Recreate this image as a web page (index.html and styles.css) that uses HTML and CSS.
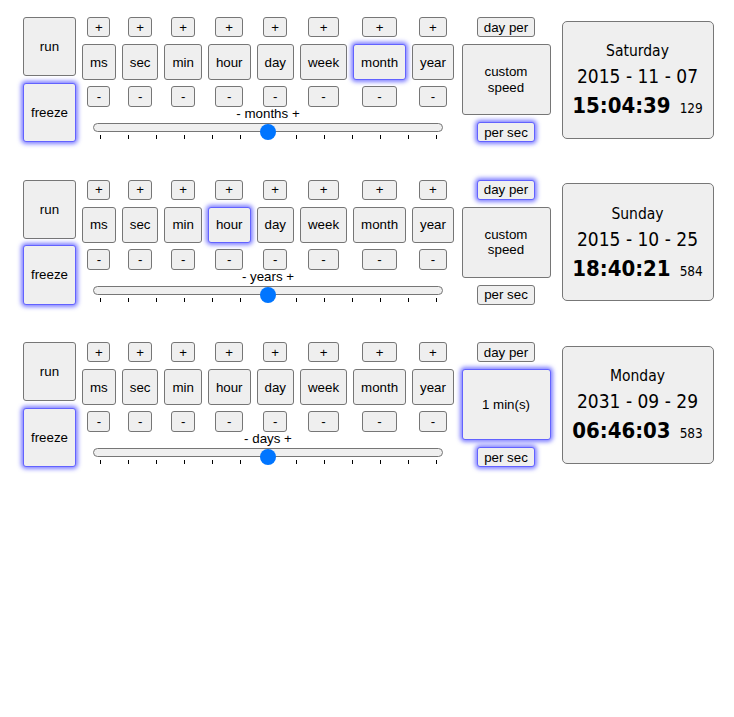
FILE: index.html
```html
<!DOCTYPE html>
<html>
<head>
<meta charset="utf-8">
<title>Clock</title>
<link rel="stylesheet" href="styles.css">
</head>
<body>
<div class="page">

  <div class="row">
    <div class="ctl">
      <button class="big">run</button>
      <button class="big on">freeze</button>
    </div>
    <div class="mid">
      <div class="units">
        <div class="unit"><button class="step">+</button><button class="u">ms</button><button class="step">-</button></div>
        <div class="unit"><button class="step">+</button><button class="u">sec</button><button class="step">-</button></div>
        <div class="unit"><button class="step">+</button><button class="u">min</button><button class="step">-</button></div>
        <div class="unit"><button class="step">+</button><button class="u">hour</button><button class="step">-</button></div>
        <div class="unit"><button class="step">+</button><button class="u">day</button><button class="step">-</button></div>
        <div class="unit"><button class="step">+</button><button class="u">week</button><button class="step">-</button></div>
        <div class="unit"><button class="step">+</button><button class="u on">month</button><button class="step">-</button></div>
        <div class="unit"><button class="step">+</button><button class="u">year</button><button class="step">-</button></div>
      </div>
      <div class="lbl">- months +</div>
      <div class="slider">
        <div class="track"></div>
        <div class="ticks"><i></i><i></i><i></i><i></i><i></i><i></i><i></i><i></i><i></i><i></i><i></i><i></i><i></i></div>
        <div class="thumb"></div>
      </div>
    </div>
    <div class="speed">
      <button class="sm">day per</button>
      <button class="custom">custom<br>speed</button>
      <button class="sm on">per sec</button>
    </div>
    <div class="clock">
      <div class="dname">Saturday</div>
      <div class="ymd">2015 - 11 - 07</div>
      <div class="hms"><b>15:04:39</b><span class="msv">129</span></div>
    </div>
  </div>

  <div class="row">
    <div class="ctl">
      <button class="big">run</button>
      <button class="big on">freeze</button>
    </div>
    <div class="mid">
      <div class="units">
        <div class="unit"><button class="step">+</button><button class="u">ms</button><button class="step">-</button></div>
        <div class="unit"><button class="step">+</button><button class="u">sec</button><button class="step">-</button></div>
        <div class="unit"><button class="step">+</button><button class="u">min</button><button class="step">-</button></div>
        <div class="unit"><button class="step">+</button><button class="u on">hour</button><button class="step">-</button></div>
        <div class="unit"><button class="step">+</button><button class="u">day</button><button class="step">-</button></div>
        <div class="unit"><button class="step">+</button><button class="u">week</button><button class="step">-</button></div>
        <div class="unit"><button class="step">+</button><button class="u">month</button><button class="step">-</button></div>
        <div class="unit"><button class="step">+</button><button class="u">year</button><button class="step">-</button></div>
      </div>
      <div class="lbl">- years +</div>
      <div class="slider">
        <div class="track"></div>
        <div class="ticks"><i></i><i></i><i></i><i></i><i></i><i></i><i></i><i></i><i></i><i></i><i></i><i></i><i></i></div>
        <div class="thumb"></div>
      </div>
    </div>
    <div class="speed">
      <button class="sm on">day per</button>
      <button class="custom">custom<br>speed</button>
      <button class="sm">per sec</button>
    </div>
    <div class="clock">
      <div class="dname">Sunday</div>
      <div class="ymd">2015 - 10 - 25</div>
      <div class="hms"><b>18:40:21</b><span class="msv">584</span></div>
    </div>
  </div>

  <div class="row">
    <div class="ctl">
      <button class="big">run</button>
      <button class="big on">freeze</button>
    </div>
    <div class="mid">
      <div class="units">
        <div class="unit"><button class="step">+</button><button class="u">ms</button><button class="step">-</button></div>
        <div class="unit"><button class="step">+</button><button class="u">sec</button><button class="step">-</button></div>
        <div class="unit"><button class="step">+</button><button class="u">min</button><button class="step">-</button></div>
        <div class="unit"><button class="step">+</button><button class="u">hour</button><button class="step">-</button></div>
        <div class="unit"><button class="step">+</button><button class="u">day</button><button class="step">-</button></div>
        <div class="unit"><button class="step">+</button><button class="u">week</button><button class="step">-</button></div>
        <div class="unit"><button class="step">+</button><button class="u">month</button><button class="step">-</button></div>
        <div class="unit"><button class="step">+</button><button class="u">year</button><button class="step">-</button></div>
      </div>
      <div class="lbl">- days +</div>
      <div class="slider">
        <div class="track"></div>
        <div class="ticks"><i></i><i></i><i></i><i></i><i></i><i></i><i></i><i></i><i></i><i></i><i></i><i></i><i></i></div>
        <div class="thumb"></div>
      </div>
    </div>
    <div class="speed">
      <button class="sm">day per</button>
      <button class="custom on">1 min(s)</button>
      <button class="sm on">per sec</button>
    </div>
    <div class="clock">
      <div class="dname">Monday</div>
      <div class="ymd">2031 - 09 - 29</div>
      <div class="hms"><b>06:46:03</b><span class="msv">583</span></div>
    </div>
  </div>

</div>
</body>
</html>
```

FILE: styles.css
```css
body {
  margin: 8px;
  background: #fff;
  font-family: "Liberation Sans", Arial, sans-serif;
  font-size: 13.33px;
  color: #000;
}

.page {
  padding: 9px 0 40px 15px;
  display: flex;
  flex-direction: column;
  gap: 37.5px;
}

.row {
  display: flex;
  align-items: center;
  height: 125px;
}

button {
  font-family: "Liberation Sans", Arial, sans-serif;
  font-size: 13.33px;
  color: #000;
  background: #efefef;
  border: 1px solid #767676;
  border-radius: 3px;
  padding: 0;
  margin: 0;
  box-sizing: border-box;
}

.on {
  border-color: #6262ff;
  box-shadow: 0 0 4px 2px rgba(95, 95, 255, 0.8);
}

.ctl {
  width: 53px;
  height: 100%;
  display: flex;
  flex-direction: column;
  gap: 6.5px;
}

.ctl .big {
  flex: 1;
}

.mid {
  margin-left: 6px;
  width: 372px;
  height: 100%;
  display: flex;
  flex-direction: column;
}

.units {
  height: 90px;
  display: flex;
  justify-content: space-between;
}

.unit {
  display: flex;
  flex-direction: column;
  align-items: center;
}

.step {
  width: 65%;
  min-width: 23px;
  height: 20px;
}

.step:first-child {
  margin-bottom: 7px;
}

.step:last-child {
  height: 21px;
}

.u {
  height: 36px;
  padding: 0 7px;
  margin-bottom: 6px;
}

.lbl {
  height: 14px;
  line-height: 14px;
  text-align: center;
}

.slider {
  position: relative;
  width: 350px;
  height: 21px;
  margin: 0 auto;
}

.track {
  margin-top: 2px;
  height: 9px;
  box-sizing: border-box;
  border: 1px solid #767676;
  border-radius: 5px;
  background: #efefef;
}

.ticks {
  display: flex;
  justify-content: space-between;
  padding: 0 6px 0 7px;
  margin-top: 3px;
}

.ticks i {
  display: block;
  width: 1px;
  height: 4px;
  background: #000;
}

.thumb {
  position: absolute;
  top: 3px;
  left: calc(50% - 8px);
  width: 16px;
  height: 16px;
  border-radius: 50%;
  background: #0075ff;
}

.speed {
  margin-left: 7.5px;
  width: 89px;
  height: 100%;
  display: flex;
  flex-direction: column;
  align-items: center;
  gap: 7px;
}

.sm {
  height: 20px;
  padding: 0 6px;
}

.custom {
  flex: 1;
  width: 100%;
  line-height: 15.5px;
}

.clock {
  margin-left: 11px;
  width: 152px;
  height: 118px;
  box-sizing: border-box;
  padding-top: 6px;
  border: 1px solid #777;
  border-radius: 5px;
  background: #efefef;
  display: flex;
  flex-direction: column;
  justify-content: center;
  align-items: center;
  font-family: "DejaVu Sans Condensed", "DejaVu Sans", sans-serif;
  font-stretch: condensed;
  white-space: nowrap;
}

.dname {
  font-size: 15.5px;
  line-height: 22px;
}

.ymd {
  font-size: 19px;
  line-height: 28px;
}

.hms {
  line-height: 32px;
}

.hms b {
  font-size: 22px;
  font-weight: bold;
}

.msv {
  font-size: 13.5px;
  margin-left: 9px;
}
```
